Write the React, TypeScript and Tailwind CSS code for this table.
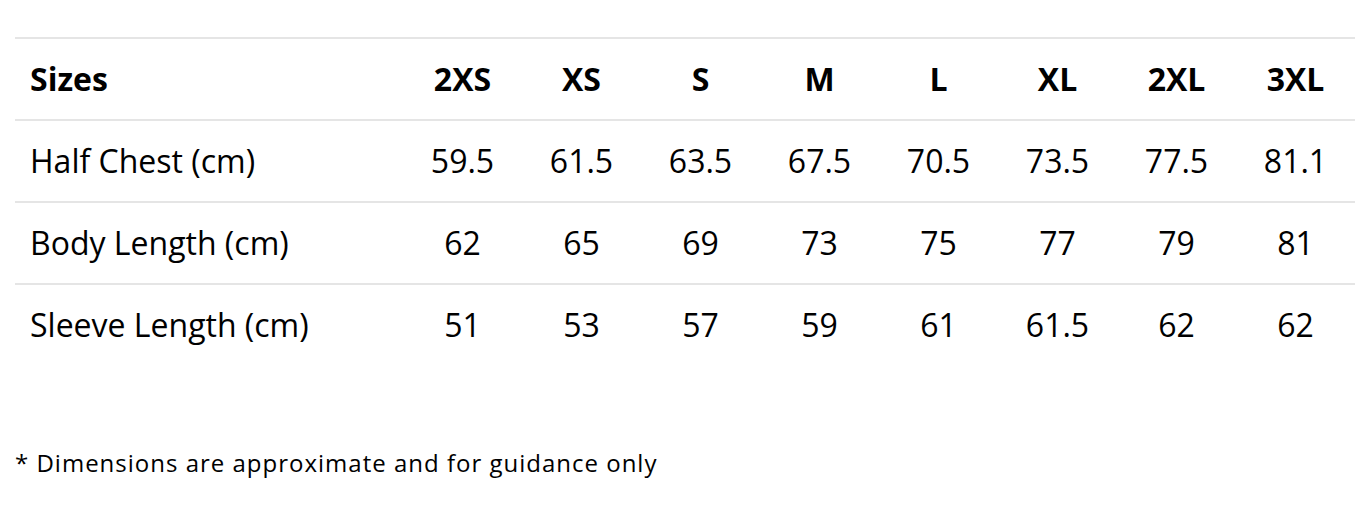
import React from "react";

const sizes = ["2XS", "XS", "S", "M", "L", "XL", "2XL", "3XL"];
const rows: { label: string; values: string[] }[] = [
  { label: "Half Chest (cm)", values: ["59.5", "61.5", "63.5", "67.5", "70.5", "73.5", "77.5", "81.1"] },
  { label: "Body Length (cm)", values: ["62", "65", "69", "73", "75", "77", "79", "81"] },
  { label: "Sleeve Length (cm)", values: ["51", "53", "57", "59", "61", "61.5", "62", "62"] },
];

export default function App() {
  return (
    <div
      className="w-[1364px] h-[506px] bg-white text-black overflow-hidden"
      style={{ fontFamily: '"Open Sans", "Noto Sans", sans-serif' }}
    >
      <div className="ml-[15px] w-[1340px] pt-[37px]">
        <div className="grid grid-cols-[388px_repeat(8,119px)] h-[82px] border-t-2 border-[#e5e5e5] text-[32px] font-bold">
          <div className="flex items-center pl-[15px]">Sizes</div>
          {sizes.map((s) => (
            <div key={s} className="flex items-center justify-center">
              {s}
            </div>
          ))}
        </div>
        {rows.map((r) => (
          <div
            key={r.label}
            className="grid grid-cols-[388px_repeat(8,119px)] h-[82px] border-t-2 border-[#e5e5e5] text-[32px]"
          >
            <div className="flex items-center pl-[15px]">{r.label}</div>
            {r.values.map((v, i) => (
              <div key={i} className="flex items-center justify-center">
                {v}
              </div>
            ))}
          </div>
        ))}
        <p className="mt-[80px] text-[24px] leading-[36px] tracking-[1px]">
          * Dimensions are approximate and for guidance only
        </p>
      </div>
    </div>
  );
}
